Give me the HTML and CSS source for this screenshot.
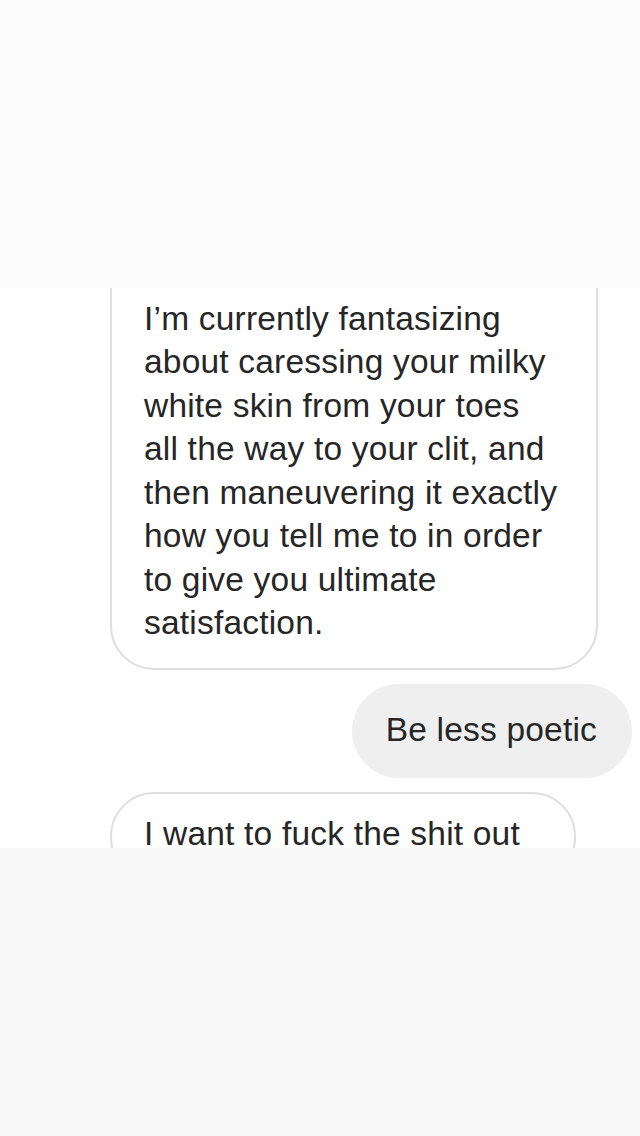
FILE: index.html
```html
<!DOCTYPE html>
<html>
<head>
<meta charset="utf-8">
<link rel="stylesheet" href="styles.css">
</head>
<body>
<div class="screen">
  <div class="band band-top"></div>
  <div class="chat">
    <div class="msg msg-in msg-first">I’m currently fantasizing<br>about caressing your milky<br>white skin from your toes<br>all the way to your clit, and<br>then maneuvering it exactly<br>how you tell me to in order<br>to give you ultimate<br>satisfaction.</div>
    <div class="msg msg-out">Be less poetic</div>
    <div class="msg msg-in msg-last">I want to fuck the shit out</div>
  </div>
  <div class="band band-bottom"></div>
</div>
</body>
</html>
```
FILE: styles.css
```css
html, body {
  margin: 0;
  padding: 0;
  background: #ffffff;
}
.screen {
  width: 640px;
  height: 1136px;
  display: flex;
  flex-direction: column;
  overflow: hidden;
}
.band {
  flex: 0 0 288px;
}
.band-top {
  background: #fbfbfb;
}
.band-bottom {
  background: #f9f9f9;
}
.chat {
  flex: 0 0 560px;
  min-height: 0;
  overflow: hidden;
  background: #ffffff;
  display: flex;
  flex-direction: column;
  align-items: flex-start;
}
.msg {
  flex-shrink: 0;
  font-family: "Liberation Sans", Arial, sans-serif;
  font-size: 33.5px;
  line-height: 43.5px;
  letter-spacing: 0.2px;
  color: #262626;
  box-sizing: border-box;
  white-space: nowrap;
}
.msg-in {
  border: 2px solid #dedede;
  border-radius: 44px;
  background: #ffffff;
  margin-left: 110px;
  padding-left: 32px;
}
.msg-first {
  width: 488px;
  margin-top: -60px;
  padding-top: 66.6px;
  padding-bottom: 23.4px;
}
.msg-out {
  align-self: flex-end;
  margin-right: 8px;
  margin-top: 14px;
  background: #efefef;
  border-radius: 47px;
  height: 94px;
  padding: 23.6px 35px 0 34px;
}
.msg-last {
  width: 466px;
  margin-top: 14px;
  padding-top: 17.6px;
  padding-bottom: 24px;
}
```
